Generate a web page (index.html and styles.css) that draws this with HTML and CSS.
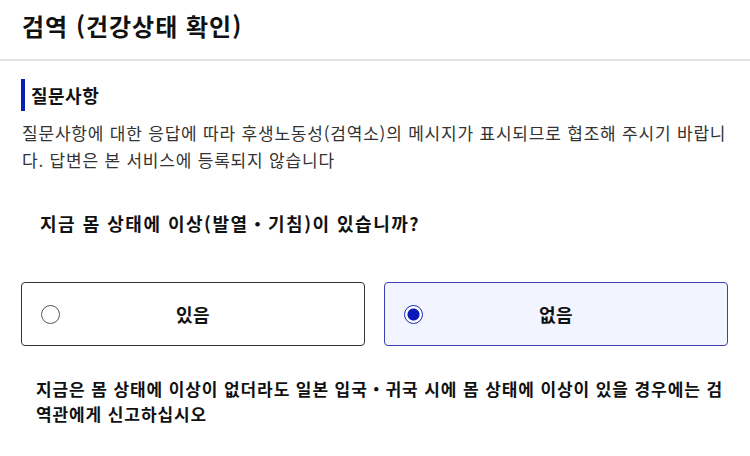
FILE: index.html
```html
<!DOCTYPE html>
<html lang="ko">
<head>
<meta charset="utf-8">
<link rel="stylesheet" href="styles.css">
</head>
<body>
<header class="page-header">
  <h1 class="page-title">검역 (건강상태 확인)</h1>
</header>
<main class="content">
  <h2 class="section-title">질문사항</h2>
  <p class="intro">질문사항에 대한 응답에 따라 후생노동성(검역소)의 메시지가 표시되므로 협조해 주시기 바랍니다. 답변은 본 서비스에 등록되지 않습니다</p>
  <p class="question">지금 몸 상태에 이상(발열・기침)이 있습니까?</p>
  <div class="choices">
    <label class="choice">
      <span class="radio"></span>
      <span class="choice-label">있음</span>
    </label>
    <label class="choice selected">
      <span class="radio"></span>
      <span class="choice-label">없음</span>
    </label>
  </div>
  <p class="note">지금은 몸 상태에 이상이 없더라도 일본 입국・귀국 시에 몸 상태에 이상이 있을 경우에는 검역관에게 신고하십시오</p>
</main>
</body>
</html>
```
FILE: styles.css
```css
* { box-sizing: border-box; }
html, body {
  margin: 0;
  padding: 0;
  background: #ffffff;
}
body {
  font-family: "Noto Sans CJK KR", "Noto Sans", sans-serif;
  color: #111;
  width: 750px;
  overflow: hidden;
}
.page-header {
  height: 61px;
  border-bottom: 2px solid #e2e2e2;
  padding: 0 22px;
  display: flex;
  align-items: center;
}
.page-title {
  margin: 0 0 8px 0;
  font-size: 24px;
  font-weight: 700;
  line-height: 30px;
  letter-spacing: 1px;
  color: #111;
}
.content {
  padding: 18px 22px 0 22px;
}
.section-title {
  margin: 0;
  font-size: 18px;
  font-weight: 700;
  line-height: 32px;
  letter-spacing: 0.5px;
  border-left: 4px solid #0a1fb0;
  padding-left: 6px;
  margin-left: -1px;
}
.intro {
  margin: 8px 0 0 0;
  font-size: 17px;
  line-height: 27px;
  letter-spacing: 0.8px;
  color: #333;
}
.question {
  margin: 38px 0 0 18px;
  font-size: 18px;
  font-weight: 700;
  line-height: 24px;
  letter-spacing: 1.5px;
}
.choices {
  margin-top: 47px;
  display: grid;
  grid-template-columns: 1fr 1fr;
  gap: 19px;
  margin-left: -1px;
}
.choice {
  height: 64px;
  border: 1px solid #333;
  border-radius: 4px;
  display: flex;
  align-items: center;
  position: relative;
  background: #fff;
}
.choice.selected {
  background: #f2f4ff;
  border-color: #3d3fb0;
}
.radio {
  position: absolute;
  left: 19px;
  top: 50%;
  width: 19px;
  height: 19px;
  margin-top: -9px;
  border: 1px solid #555;
  border-radius: 50%;
  background: #fff;
}
.choice.selected .radio {
  border-color: #1a27b8;
  background: radial-gradient(circle, #0a1ab8 0 5.5px, #fff 6.5px);
}
.choice-label {
  flex: 1;
  text-align: center;
  font-size: 18px;
  font-weight: 700;
  letter-spacing: 0.5px;
}
.note {
  margin: 30px 0 0 14px;
  font-size: 17px;
  font-weight: 700;
  line-height: 25px;
  letter-spacing: 0.9px;
}
```
